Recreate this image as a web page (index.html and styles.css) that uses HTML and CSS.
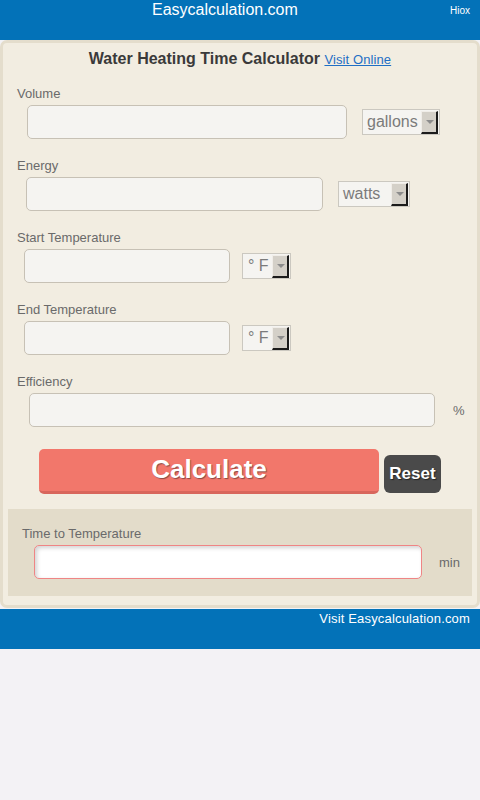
FILE: index.html
```html
<!DOCTYPE html>
<html>
<head>
<meta charset="utf-8">
<link rel="stylesheet" href="styles.css">
</head>
<body>
<header class="top">
  <div class="brand">Easycalculation.com</div>
  <div class="hiox">Hiox</div>
</header>
<main class="card">
  <h1 class="title">Water Heating Time Calculator <a href="#" class="visit">Visit Online</a></h1>
  <div class="fields">
    <div class="field">
      <div class="label">Volume</div>
      <div class="row r-vol">
        <div class="input w-vol"></div>
        <div class="select s-gal"><span>gallons</span><i class="arrow"></i></div>
      </div>
    </div>
    <div class="field">
      <div class="label">Energy</div>
      <div class="row r-en">
        <div class="input w-en"></div>
        <div class="select s-watt"><span>watts</span><i class="arrow"></i></div>
      </div>
    </div>
    <div class="field">
      <div class="label">Start Temperature</div>
      <div class="row r-temp">
        <div class="input w-temp"></div>
        <div class="select s-f"><span>° F</span><i class="arrow"></i></div>
      </div>
    </div>
    <div class="field">
      <div class="label">End Temperature</div>
      <div class="row r-temp">
        <div class="input w-temp"></div>
        <div class="select s-f"><span>° F</span><i class="arrow"></i></div>
      </div>
    </div>
    <div class="field">
      <div class="label">Efficiency</div>
      <div class="row r-eff">
        <div class="input w-eff"></div>
        <div class="unit">%</div>
      </div>
    </div>
    <div class="buttons">
      <button class="calc">Calculate</button>
      <button class="reset">Reset</button>
    </div>
  </div>
  <section class="result">
    <div class="label">Time to Temperature</div>
    <div class="row r-res">
      <div class="input out"></div>
      <div class="unit">min</div>
    </div>
  </section>
</main>
<footer class="bottom">
  <a href="#" class="foot-link">Visit Easycalculation.com</a>
</footer>
</body>
</html>
```

FILE: styles.css
```css
* { box-sizing: border-box; }
html, body { margin: 0; padding: 0; }
body {
  background: #f3f2f5;
  font-family: "Liberation Sans", Arial, sans-serif;
  width: 480px;
}
.top {
  height: 40px;
  background: #0372b8;
  position: relative;
  color: #fff;
}
.brand {
  font-size: 16px;
  line-height: 18px;
  padding-top: 1px;
  padding-left: 152px;
}
.hiox {
  position: absolute;
  right: 10px;
  top: 5px;
  font-size: 10px;
  line-height: 12px;
}
.card {
  background: #f2ede1;
  border: 3px solid #e4ddcc;
  border-radius: 7px;
  padding: 6px 5px 9px 5px;
}
.title {
  margin: 0;
  height: 19px;
  text-align: center;
  font-size: 16px;
  line-height: 19px;
  font-weight: bold;
  color: #3a3a3a;
}
.visit {
  font-size: 13px;
  font-weight: normal;
  color: #1f6fc5;
  text-decoration: underline;
  letter-spacing: 0.1px;
}
.fields {
  padding-left: 9px;
  padding-top: 17px;
}
.field {
  margin-bottom: 18px;
}
.label {
  font-size: 13px;
  line-height: 16px;
  height: 17px;
  padding-top: 1px;
  color: #6a6a6a;
  margin-bottom: 3px;
}
.row {
  display: flex;
  align-items: center;
  height: 34px;
}
.input {
  flex-shrink: 0;
  height: 34px;
  background: #f5f4f1;
  border: 1px solid #c7c1b5;
  border-radius: 5px;
}
.r-vol .input { margin-left: 10px; width: 320px; }
.r-vol .select { margin-left: 15px; width: 78px; }
.r-en .input { margin-left: 9px; width: 297px; }
.r-en .select { margin-left: 15px; width: 72px; }
.r-temp .input { margin-left: 7px; width: 206px; }
.r-temp .select { margin-left: 12px; width: 49px; }
.r-eff .input { margin-left: 12px; width: 406px; }
.r-eff .unit { margin-left: 18px; }
.select {
  flex-shrink: 0;
  height: 26px;
  border: 1px solid #cbc8c0;
  background: #f5f4f1;
  display: flex;
  align-items: center;
  justify-content: space-between;
  padding: 0 1px 0 4px;
  color: #7b7b7b;
  font-size: 16px;
}
.s-f { padding-left: 5px; }
.arrow {
  width: 17px;
  height: 23px;
  background: #d4d0c8;
  border-right: 2px solid #1b1b1b;
  border-bottom: 2px solid #1b1b1b;
  border-top: 1px solid #f0ede8;
  border-left: 1px solid #f0ede8;
  position: relative;
}
.arrow::after {
  content: "";
  position: absolute;
  left: 4px;
  top: 8px;
  border-left: 4px solid transparent;
  border-right: 4px solid transparent;
  border-top: 4px solid #8c8c8c;
}
.unit {
  flex-shrink: 0;
  font-size: 13px;
  color: #6a6a6a;
}
.buttons {
  display: flex;
  align-items: flex-end;
  padding-left: 22px;
  padding-top: 4px;
}
.calc {
  width: 340px;
  height: 45px;
  background: #f2776b;
  border: none;
  border-bottom: 3px solid #d8665c;
  border-radius: 5px;
  color: #fff;
  font-family: "Liberation Sans", Arial, sans-serif;
  font-weight: bold;
  font-size: 26px;
  text-shadow: 1px 1px 1px #8a4a44;
  padding: 0 0 2px 0;
}
.reset {
  width: 57px;
  height: 38px;
  margin-left: 5px;
  margin-bottom: 1px;
  background: #4a4a4a;
  border: none;
  border-radius: 6px;
  color: #fff;
  font-family: "Liberation Sans", Arial, sans-serif;
  font-weight: bold;
  font-size: 17px;
  text-shadow: 1px 1px 1px #222;
  padding: 0;
}
.result {
  margin-top: 15px;
  background: #e3dcca;
  padding: 16px 14px 17px 14px;
}
.r-res .out {
  margin-left: 12px;
  width: 388px;
  background: #fff;
  border: 1px solid #ef8585;
  box-shadow: inset 2px 2px 4px rgba(0,0,0,0.18);
}
.r-res .unit { margin-left: 17px; }
.bottom {
  margin-top: 1px;
  height: 40px;
  background: #0372b8;
  text-align: right;
  padding: 1px 10px 0 0;
  line-height: 16px;
}
.foot-link {
  color: #fff;
  font-size: 13px;
  line-height: 16px;
  text-decoration: none;
  letter-spacing: 0.17px;
}
```
